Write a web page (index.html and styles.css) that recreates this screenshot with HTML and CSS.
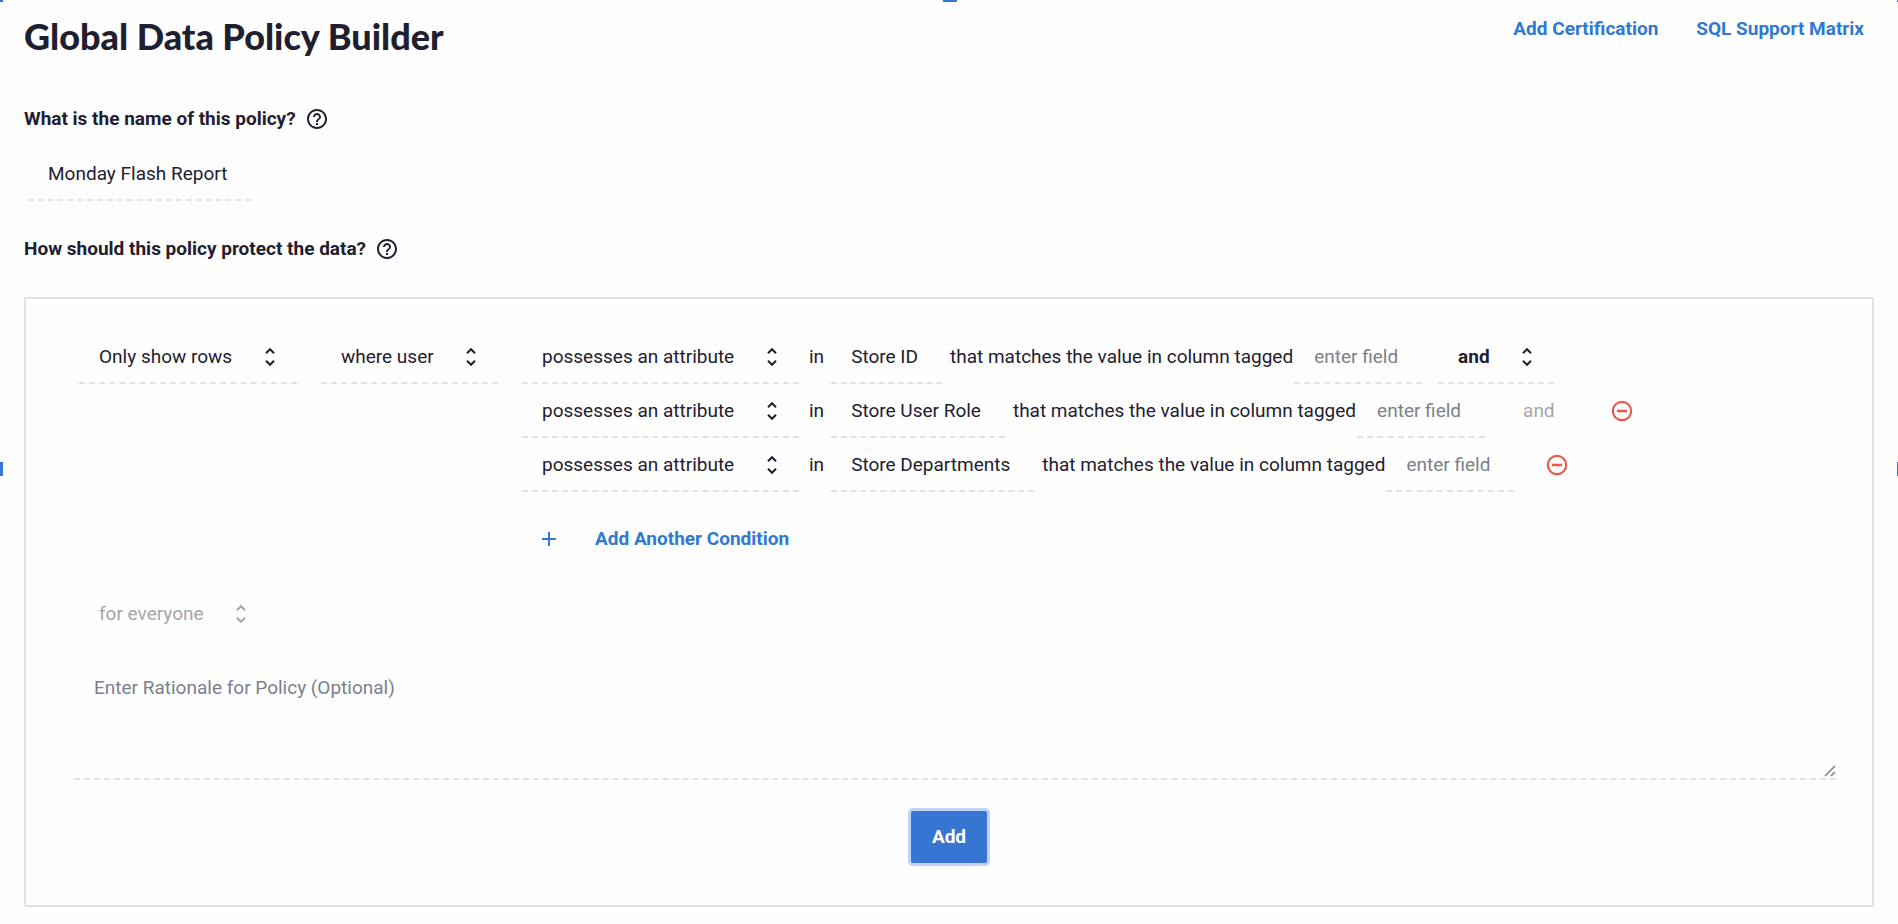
FILE: index.html
```html
<!DOCTYPE html>
<html lang="en">
<head>
    <meta charset="UTF-8">
    <meta name="viewport" content="width=device-width, initial-scale=1.0">
    <title>Global Data Policy Builder</title>
    <link rel="stylesheet" href="styles.css">
</head>
<body>
    <!-- Selection handles on the window edges -->
    <span class="handle handle-corner-left"></span>
    <span class="handle handle-top"></span>
    <span class="handle handle-corner-right"></span>
    <span class="handle handle-left"></span>
    <span class="handle handle-right"></span>

    <!-- Shared icons -->
    <svg class="sprite" aria-hidden="true">
        <symbol id="icon-help" viewBox="0 0 24 24">
            <path d="M11 18h2v-2h-2v2zm1-16C6.480 2 2 6.480 2 12s4.480 10 10 10 10-4.480 10-10S17.520 2 12 2zm0 18c-4.410 0-8-3.590-8-8s3.590-8 8-8 8 3.590 8 8-3.590 8-8 8zm0-14c-2.210 0-4 1.790-4 4h2c0-1.100.9-2 2-2s2 .9 2 2c0 2-3 1.750-3 5h2c0-2.250 3-2.500 3-5 0-2.210-1.790-4-4-4z"/>
        </symbol>
        <symbol id="icon-sort" viewBox="0 0 12 20">
            <path d="M2 6.200l4-4 4 4M2 13.800l4 4 4-4" fill="none" stroke="currentColor" stroke-width="2"/>
        </symbol>
        <symbol id="icon-remove" viewBox="0 0 24 24">
            <circle cx="12" cy="12" r="9.200" fill="none" stroke="currentColor" stroke-width="2.200"/>
            <path d="M7 12h10" stroke="currentColor" stroke-width="2.600"/>
        </symbol>
    </svg>

    <!-- Header -->
    <header class="header">
        <h1>Global Data Policy Builder</h1>
        <nav class="links">
            <a href="#">Add Certification</a>
            <a href="#">SQL Support Matrix</a>
        </nav>
    </header>

    <form class="content">
        <!-- Policy name -->
        <div class="question">
            <label for="policy-name">What is the name of this policy?</label>
            <svg class="icon"><use href="#icon-help"/></svg>
        </div>
        <input class="field name" type="text" id="policy-name" value="Monday Flash Report">

        <div class="question question-protect">
            <h2>How should this policy protect the data?</h2>
            <svg class="icon"><use href="#icon-help"/></svg>
        </div>

        <!-- Rule builder -->
        <section class="panel">
            <div class="rule">
                <div class="select">
                    <select aria-label="Action"><option>Only show rows</option></select>
                    <svg class="sort"><use href="#icon-sort"/></svg>
                </div>
                <div class="select">
                    <select aria-label="Subject"><option>where user</option></select>
                    <svg class="sort"><use href="#icon-sort"/></svg>
                </div>

                <div class="conditions">
                    <div class="condition">
                        <div class="select">
                            <select aria-label="Condition 1"><option>possesses an attribute</option></select>
                            <svg class="sort"><use href="#icon-sort"/></svg>
                        </div>
                        <span class="in">in</span>
                        <input class="field" type="text" aria-label="Attribute 1" value="Store ID">
                        <label class="matches" for="tag-1">that matches the value in column tagged</label>
                        <input class="field" type="text" id="tag-1" placeholder="enter field">
                        <div class="select operator">
                            <select aria-label="Operator"><option>and</option></select>
                            <svg class="sort"><use href="#icon-sort"/></svg>
                        </div>
                    </div>
                    <div class="condition">
                        <div class="select">
                            <select aria-label="Condition 2"><option>possesses an attribute</option></select>
                            <svg class="sort"><use href="#icon-sort"/></svg>
                        </div>
                        <span class="in">in</span>
                        <input class="field" type="text" aria-label="Attribute 2" value="Store User Role">
                        <label class="matches" for="tag-2">that matches the value in column tagged</label>
                        <input class="field" type="text" id="tag-2" placeholder="enter field">
                        <span class="and">and</span>
                        <button class="remove" type="button" aria-label="Remove condition 2"><svg class="icon"><use href="#icon-remove"/></svg></button>
                    </div>
                    <div class="condition">
                        <div class="select">
                            <select aria-label="Condition 3"><option>possesses an attribute</option></select>
                            <svg class="sort"><use href="#icon-sort"/></svg>
                        </div>
                        <span class="in">in</span>
                        <input class="field" type="text" aria-label="Attribute 3" value="Store Departments">
                        <label class="matches" for="tag-3">that matches the value in column tagged</label>
                        <input class="field" type="text" id="tag-3" placeholder="enter field">
                        <button class="remove remove-last" type="button" aria-label="Remove condition 3"><svg class="icon"><use href="#icon-remove"/></svg></button>
                    </div>
                    <button class="add-condition" type="button">
                        <svg class="plus" viewBox="0 0 14 14"><path d="M7 0v14M0 7h14" stroke="currentColor" stroke-width="2"/></svg>
                        Add Another Condition
                    </button>
                </div>
            </div>

            <div class="select everyone">
                <select aria-label="Applies to" disabled><option>for everyone</option></select>
                <svg class="sort"><use href="#icon-sort"/></svg>
            </div>

            <textarea class="rationale" aria-label="Rationale" placeholder="Enter Rationale for Policy (Optional)"></textarea>

            <button class="submit" type="submit">Add</button>
        </section>
    </form>
</body>
</html>
```
FILE: styles.css
```css
/* General Styling */
* {
    box-sizing: border-box;
}

body {
    font-family: Roboto, sans-serif;
    font-size: 19px;
    line-height: 24px;
    margin: 0;
    padding: 16px 24px;
    background-color: #fefefe;
    color: #1e2030;
}

input, select, textarea, button {
    font: inherit;
    color: inherit;
    margin: 0;
    border: none;
    border-radius: 0;
    background: none;
    outline: none;
}

::placeholder {
    color: #7c7f8b;
    opacity: 1;
}

.sprite {
    display: none;
}

.icon {
    display: block;
    width: 24px;
    height: 24px;
    fill: currentColor;
}

/* Selection Handles */
.handle {
    position: absolute;
    background-color: #3676d2;
}

.handle-corner-left {
    top: 0;
    left: 0;
    width: 3px;
    height: 2px;
}

.handle-corner-right {
    top: 0;
    right: 0;
    width: 1px;
    height: 2px;
}

.handle-top {
    top: 0;
    left: calc(50% - 6px);
    width: 14px;
    height: 2px;
}

.handle-left {
    top: 50%;
    left: 0;
    width: 3px;
    height: 14px;
}

.handle-right {
    top: 50%;
    right: 0;
    width: 1px;
    height: 14px;
}

/* Header Section */
.header {
    display: flex;
    justify-content: space-between;
    align-items: flex-start;
}

h1 {
    margin: 0;
    font-family: Lato, sans-serif;
    font-size: 36px;
    font-weight: 900;
    line-height: 40px;
}

.links {
    display: flex;
    gap: 38px;
    padding: 1px 10px 0 0;
}

.links a {
    color: #3079d0;
    font-weight: 700;
    text-decoration: none;
}

/* Questions */
.question {
    display: flex;
    align-items: center;
    gap: 9px;
    margin-top: 51px;
}

.question label, .question h2 {
    margin: 0;
    font-size: 19px;
    font-weight: 700;
}

.question-protect {
    margin-top: 36px;
}

/* Fields */
.field {
    display: block;
    height: 54px;
    padding: 0 24px 0 20px;
    border-bottom: 2px dashed #e2e2e7;
    field-sizing: content;
}

.name {
    margin: 16px 0 0 4px;
}

.select {
    position: relative;
    display: flex;
}

.select select {
    height: 54px;
    padding: 2px 64px 0 20px;
    border-bottom: 2px dashed #e2e2e7;
    appearance: none;
}

/* Arrows drawn over the right end of the drop-down */
.sort {
    position: absolute;
    top: 17px;
    right: 21px;
    width: 12px;
    height: 20px;
    pointer-events: none;
}

/* Panel */
.panel {
    display: flex;
    flex-direction: column;
    align-items: flex-start;
    margin-top: 36px;
    padding: 31px 36px 42px;
    border: 2px solid #e0e0e6;
    border-radius: 2px;
}

.rule {
    display: flex;
    align-items: flex-start;
    gap: 24px;
    padding-left: 17px;
}

.condition {
    display: flex;
    align-items: center;
}

.in {
    margin: 0 7px 0 10px;
}

.matches {
    margin: 0 1px 0 8px;
}

.operator {
    margin-left: 16px;
    font-weight: 700;
}

.and {
    margin-left: 38px;
    color: #a3a5ad;
}

.remove {
    margin-left: 55px;
    padding: 0;
    color: #e85c4a;
}

.remove-last {
    margin-left: 31px;
}

.add-condition {
    display: flex;
    align-items: center;
    gap: 39px;
    margin-top: 35px;
    padding: 0 20px;
    color: #3079d0;
    font-weight: 700;
}

.plus {
    width: 14px;
    height: 14px;
}

.everyone {
    margin: 36px 0 15px 17px;
    color: #a3a5ad;
}

.everyone select {
    border-color: transparent;
    opacity: 1;
}

.rationale {
    align-self: stretch;
    height: 124px;
    margin-left: 12px;
    padding: 20px;
    border-bottom: 2px dashed #e2e2e7;
    resize: vertical;
}

.rationale::-webkit-resizer {
    background: url("data:image/svg+xml,%3Csvg xmlns='http://www.w3.org/2000/svg' viewBox='0 0 15 15'%3E%3Cpath d='M4 13L14 3M10 13l4-4' stroke='%23777' stroke-width='1.400'/%3E%3C/svg%3E") no-repeat;
}

/* Submit Button */
.submit {
    align-self: center;
    margin-top: 31px;
    padding: 14px 21px;
    border-radius: 2px;
    background-color: #3676d2;
    box-shadow: 0 0 0 3px #c3d3f2;
    color: #ffffff;
    font-weight: 700;
}
```
